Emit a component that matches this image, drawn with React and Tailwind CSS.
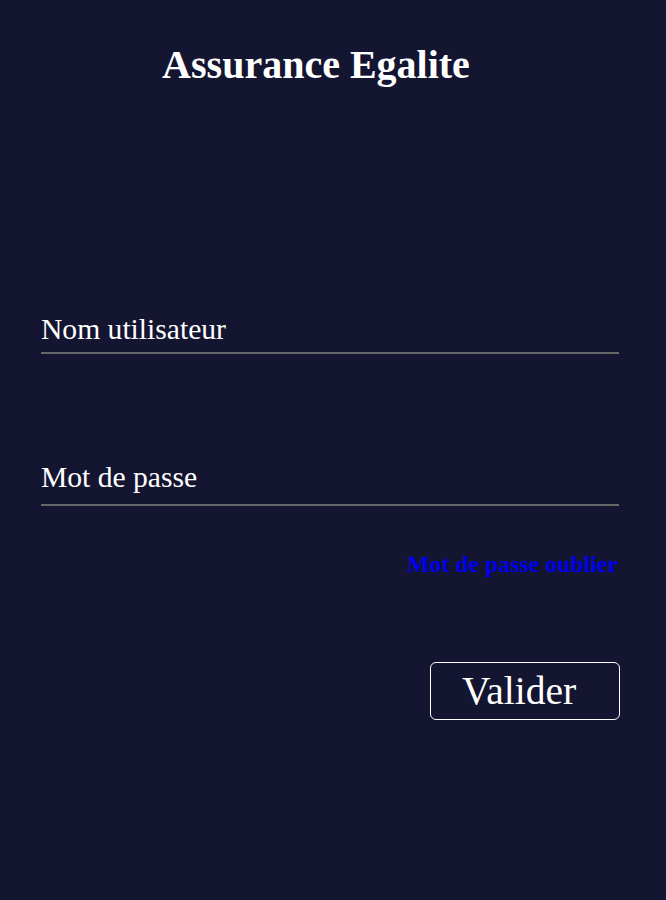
import React, { useState } from 'react';

export default function App() {
  const [user, setUser] = useState('');
  const [pass, setPass] = useState('');

  return (
    <div className="min-h-[900px] w-full bg-[#141530] font-['Liberation_Serif',serif] text-white">
      {/* title */}
      <h1 className="pt-[42px] pr-[34px] text-center text-[40px] leading-[46px] font-bold">
        Assurance Egalite
      </h1>

      <form className="mt-[218px] ml-[41px] w-[578px] flex flex-col" onSubmit={(e) => e.preventDefault()}>
        <input
          className="h-[48px] w-full bg-transparent border-b-2 border-[#666666] text-[29.6px] text-white placeholder:text-white outline-none"
          placeholder="Nom utilisateur"
          value={user}
          onChange={(e) => setUser(e.target.value)}
        />

        <input
          type="password"
          className="mt-[100px] h-[52px] pb-[4px] w-full bg-transparent border-b-2 border-[#666666] text-[29.6px] text-white placeholder:text-white outline-none"
          placeholder="Mot de passe"
          value={pass}
          onChange={(e) => setPass(e.target.value)}
        />

        <div className="mt-[44px] flex justify-end pr-[1px]">
          <a href="#" className="text-[23.8px] leading-[28px] font-bold text-[#0000ee]">
            Mot de passe oublier
          </a>
        </div>

        <div className="mt-[84px] flex justify-end mr-[-1px]">
          <button
            type="submit"
            className="w-[190px] h-[58px] border border-white rounded-[6px] pl-[31px] text-left text-[39.6px] leading-[44px] text-white"
          >
            Valider
          </button>
        </div>
      </form>
    </div>
  );
}
